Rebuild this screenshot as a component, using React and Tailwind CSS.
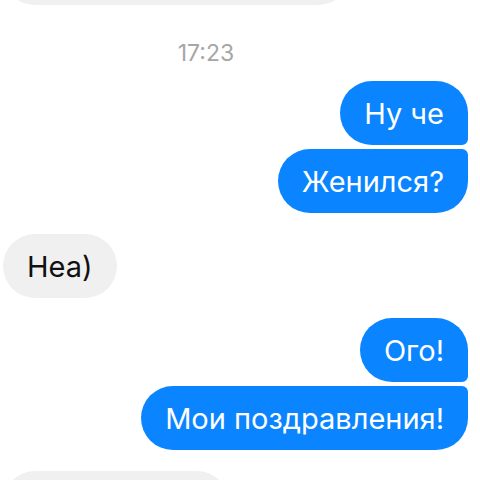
import React from 'react';

const messages = [
  { id: 1, side: 'right', text: 'Ну че', shape: 'rounded-[32px] rounded-br-[6px]', gap: 'mt-4' },
  { id: 2, side: 'right', text: 'Женился?', shape: 'rounded-[32px] rounded-tr-[6px]', gap: 'mt-1' },
  { id: 3, side: 'left', text: 'Неа)', shape: 'rounded-[32px]', gap: 'mt-[21px]' },
  { id: 4, side: 'right', text: 'Ого!', shape: 'rounded-[32px] rounded-br-[6px]', gap: 'mt-5' },
  { id: 5, side: 'right', text: 'Мои поздравления!', shape: 'rounded-[32px] rounded-tr-[6px]', gap: 'mt-1' },
];

const Bubble = ({ side, text, shape, gap }) => {
  const mine = side === 'right';
  return (
    <div className={`flex ${mine ? 'justify-end' : 'justify-start'} ${gap}`}>
      <div
        className={`h-16 px-6 flex items-center text-[29px] leading-none ${shape} ${
          mine ? 'bg-[#0a84ff] text-white' : 'bg-[#f1f0f0] text-[#111]'
        }`}
      >
        {text}
      </div>
    </div>
  );
};

const App = () => {
  return (
    <div
      className="w-[480px] h-[480px] overflow-hidden bg-white pl-[3px] pr-3"
      style={{ fontFamily: 'Inter, "Noto Sans", sans-serif' }}
    >
      <div className="flex flex-col">
        <div className="mt-[-59px] h-16 w-[347px] rounded-[32px] bg-[#f1f0f0]" />

        <div className="mt-9 w-[406px] text-center text-[23px] leading-6 text-[#a6a6a6]">
          17:23
        </div>

        {messages.map((m) => (
          <Bubble key={m.id} {...m} />
        ))}

        <div className="mt-[21px] h-16 w-[226px] rounded-[32px] bg-[#f1f0f0]" />
      </div>
    </div>
  );
};

export default App;
